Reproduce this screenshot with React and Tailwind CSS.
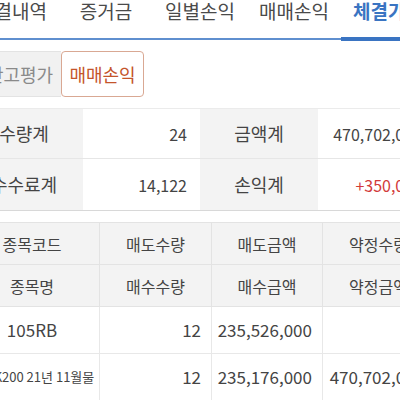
import React from 'react'

const FONT = { fontFamily: '"Noto Sans CJK KR", "Noto Sans", sans-serif' }

const TABS = ['체결내역', '증거금', '일별손익', '매매손익', '체결가능']

export default function App() {
    return (
        <div className="w-[400px] h-[400px] overflow-hidden bg-white text-[#444]" style={FONT}>
            <div className="-ml-[35px] w-[470px]">
                {/* top tabs */}
                <div className="flex h-[40px] border-b-2 border-[#5f8fcf]">
                    {TABS.map((t, i) => (
                        <div key={t} className={`relative w-[94px] text-center text-[19px] leading-[22px] whitespace-nowrap ${i === 4 ? 'text-[#3a74c2] font-bold' : 'text-[#4a4a4a]'}`}>
                            {t}
                            {i === 4 && <span className="absolute left-0 right-0 bottom-[-3px] h-[4px] bg-[#3a74c2]"></span>}
                        </div>
                    ))}
                </div>

                {/* segment buttons */}
                <div className="mt-[11px] pl-[13px] flex h-[46px]">
                    <div className="w-[83px] flex items-center justify-center bg-[#f1f1f1] border border-r-0 border-[#e3e3e3] rounded-l text-[18px] text-[#8a8a8a] whitespace-nowrap">잔고평가</div>
                    <div className="w-[83px] flex items-center justify-center bg-white border border-[#d9a893] rounded text-[18px] text-[#c4552b]">매매손익</div>
                </div>

                {/* summary */}
                <div className="mt-[11px] border-t border-[#ebebeb] border-b border-b-[#d8d8d8] grid grid-cols-[118px_117px_118px_117px] text-[16px]">
                    <div className="h-[50px] flex items-center justify-center bg-[#f3f3f3] border-b border-[#e6e6e6] text-[18px]">수량계</div>
                    <div className="h-[50px] flex items-center justify-end pr-[13px] border-b border-[#e6e6e6]">24</div>
                    <div className="h-[50px] flex items-center justify-center bg-[#f3f3f3] border-b border-[#e6e6e6] text-[18px]">금액계</div>
                    <div className="h-[50px] flex items-center justify-end pr-[13px] border-b border-[#e6e6e6]">470,702,000</div>
                    <div className="h-[51px] flex items-center justify-center bg-[#f3f3f3] text-[18px] whitespace-nowrap">수수료계</div>
                    <div className="h-[51px] flex items-center justify-end pr-[13px]">14,122</div>
                    <div className="h-[51px] flex items-center justify-center bg-[#f3f3f3] text-[18px]">손익계</div>
                    <div className="h-[51px] flex items-center justify-end pr-[13px] text-[#d23a3a]">+350,000</div>
                </div>

                {/* detail table */}
                <div className="mt-[11px] border-t border-[#e3e3e3] grid grid-cols-[135px_112px_111px_112px]">
                    {['종목코드', '매도수량', '매도금액', '약정수량', '종목명', '매수수량', '매수금액', '약정금액'].map((h) => (
                        <div key={h} className="h-[42px] flex items-center justify-center bg-[#f3f3f3] border-b border-r border-[#e3e3e3] text-[16px] whitespace-nowrap">{h}</div>
                    ))}

                    <div className="h-[47px] flex items-center justify-center border-b border-r border-[#e8e8e8] text-[17px]">105RB</div>
                    <div className="h-[47px] flex items-center justify-end pr-[10px] border-b border-r border-[#e8e8e8] text-[17px]">12</div>
                    <div className="h-[47px] flex items-center justify-end pr-[10px] border-b border-r border-[#e8e8e8] text-[17px]">235,526,000</div>
                    <div className="h-[47px] flex items-center justify-end pr-[10px] border-b border-r border-[#e8e8e8] text-[17px]"></div>

                    <div className="h-[47px] flex items-center justify-center border-b border-r border-[#e8e8e8] text-[13px] whitespace-nowrap">미니K200 21년 11월물</div>
                    <div className="h-[47px] flex items-center justify-end pr-[10px] border-b border-r border-[#e8e8e8] text-[17px]">12</div>
                    <div className="h-[47px] flex items-center justify-end pr-[10px] border-b border-r border-[#e8e8e8] text-[17px]">235,176,000</div>
                    <div className="h-[47px] flex items-center justify-end pr-[10px] border-b border-r border-[#e8e8e8] text-[17px]">470,702,000</div>
                </div>
            </div>
        </div>
    )
}
